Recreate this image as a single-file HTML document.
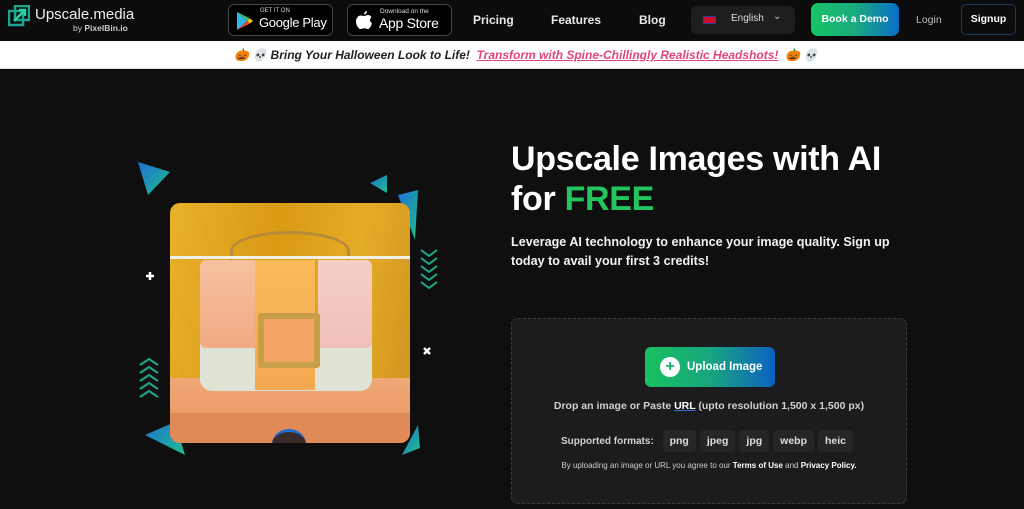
<!DOCTYPE html>
<html><head><meta charset="utf-8"><style>
*{margin:0;padding:0;box-sizing:border-box}
body{width:1024px;height:509px;overflow:hidden;background:#0f0f10;font-family:"Liberation Sans",sans-serif;color:#fff;position:relative}
.nav{position:absolute;left:0;top:0;width:1024px;height:41px;background:#0c0c0d}
.abs{position:absolute}
.store{position:absolute;top:4px;height:32px;border:1px solid #444;border-radius:6px;background:#000}
.nl{position:absolute;top:13px;font-size:12px;font-weight:bold;color:#e8e8e8}
.banner{position:absolute;top:41px;left:0;width:1024px;height:28px;background:#fff;border-bottom:1px solid #ddd;font-size:12px;font-style:italic;font-weight:bold;color:#222}
.fmt{display:inline-block;background:#262628;border-radius:4px;padding:3px 7px;margin-left:4px;font-size:10.5px;color:#ddd;font-weight:bold}
</style></head><body>
<div class="nav">
 <svg class="abs" style="left:8px;top:5px" width="22" height="22" viewBox="0 0 22 22"><rect x="1" y="6" width="14" height="14" fill="none" stroke="#1fa58f" stroke-width="2.5"/><rect x="7" y="1" width="14" height="14" fill="none" stroke="#1fa58f" stroke-width="2.5"/><path d="M6 16L17 5M11 5h6v6" stroke="#2dd4a0" stroke-width="2.5" fill="none"/></svg>
 <div class="abs" style="left:35px;top:6px;font-size:15px;color:#eee">Upscale.media</div>
 <div class="abs" style="left:73px;top:23px;font-size:8.5px;color:#ccc">by <b>PixelBin.io</b></div>
 <div class="store" style="left:228px;width:105px"><svg class="abs" style="left:7px;top:6px" width="18" height="20" viewBox="0 0 18 20"><path d="M1 1L11 10L1 19Z" fill="#2fb6ea"/><path d="M1 1L14 7.5L11 10Z" fill="#34c56b"/><path d="M1 19L14 12.5L11 10Z" fill="#ea4335"/><path d="M14 7.5L17 10L14 12.5L11 10Z" fill="#fbbc04"/></svg><div class="abs" style="left:31px;top:3px;font-size:6px;color:#ddd">GET IT ON</div><div class="abs" style="left:30px;top:10px;font-size:13px;color:#fff;white-space:nowrap;letter-spacing:-0.3px">Google Play</div></div>
 <div class="store" style="left:347px;width:105px"><svg class="abs" style="left:8px;top:6px" width="16" height="19" viewBox="0 0 16 19"><path d="M11 0c0 2-1.5 3.5-3 3.5C8 1.5 9.5 0 11 0zM8 5c1.5 0 2.5-1 4-1 1.5 0 3 1 3.5 2.5-2 1-2 4.5.5 5.5-.7 2.5-2.3 6-4 6-1.4 0-1.8-.8-3.5-.8S6 18 4.5 18C2.5 18 0 14 0 10.5 0 7 2.3 4.5 4.5 4.5 6 4.5 7 5 8 5z" fill="#fff"/></svg><div class="abs" style="left:32px;top:3px;font-size:6.5px;color:#ddd">Download on the</div><div class="abs" style="left:31px;top:10px;font-size:14px;color:#fff;white-space:nowrap;letter-spacing:-0.3px">App Store</div></div>
 <div class="nl" style="left:473px">Pricing</div>
 <div class="nl" style="left:551px">Features</div>
 <div class="nl" style="left:639px">Blog</div>
 <div class="abs" style="left:691px;top:6px;width:104px;height:28px;background:#1e1e20;border-radius:6px"><div class="abs" style="left:12px;top:10px;width:13px;height:8px;background:#c8102e;border:1px solid #2a3f8f"></div><div class="abs" style="left:40px;top:7px;font-size:10px;color:#ddd">English</div><div class="abs" style="left:82px;top:5px;font-size:10px;color:#ccc">&#8964;</div></div>
 <div class="abs" style="left:811px;top:3px;width:88px;height:33px;border-radius:7px;background:linear-gradient(90deg,#16c464,#1aaa80 50%,#0a6ec8);font-size:10.5px;font-weight:bold;text-align:center;line-height:33px">Book a Demo</div>
 <div class="abs" style="left:916px;top:14px;font-size:10.5px;color:#bbb">Login</div>
 <div class="abs" style="left:961px;top:4px;width:55px;height:31px;border:1px solid #1c3a5a;border-radius:5px;font-size:10.5px;font-weight:bold;text-align:center;line-height:29px">Signup</div>
</div>
<div class="banner"><div class="abs" style="left:234px;top:7px">🎃 💀 Bring Your Halloween Look to Life! &nbsp;<span style="color:#e0457b;text-decoration:underline">Transform with Spine-Chillingly Realistic Headshots!</span> &nbsp;🎃 💀</div></div>

<svg class="abs" style="left:130px;top:150px" width="320" height="320" viewBox="0 0 320 320">
<defs><linearGradient id="g" x1="0" y1="0" x2="1" y2="1"><stop offset="0" stop-color="#1d6fd6"/><stop offset="1" stop-color="#1fbf8a"/></linearGradient></defs>
<path d="M8 12L40 22L18 45Z" fill="url(#g)"/><path d="M240 33L257 25L257 43Z" fill="url(#g)"/><path d="M268 45L288 40L285 90Z" fill="url(#g)"/>
<path d="M15 285L45 272L55 305Z" fill="url(#g)"/><path d="M272 305L288 275L290 298Z" fill="url(#g)"/>
<g stroke="#1ca88a" stroke-width="2" fill="none"><path d="M10 215l9-6 9 6M10 223l9-6 9 6M10 231l9-6 9 6M10 239l9-6 9 6M10 247l9-6 9 6"/><path d="M291 100l8 6 8-6M291 108l8 6 8-6M291 116l8 6 8-6M291 124l8 6 8-6M291 132l8 6 8-6"/></g>
<path d="M16 126h8M20 122v8" stroke="#fff" stroke-width="2.5"/><path d="M294 198l6 6M300 198l-6 6" stroke="#fff" stroke-width="2.5"/>
</svg>
<div class="abs" style="left:170px;top:203px;width:240px;height:240px;border-radius:10px;overflow:hidden;background:linear-gradient(100deg,#e9b12a,#d99a14 40%,#e5ac26 70%,#cf9220)">
 <div class="abs" style="left:0;top:175px;width:240px;height:65px;background:linear-gradient(#f0a877,#e8935f)"></div>
 <div class="abs" style="left:0;top:210px;width:240px;height:30px;background:#e08a55"></div>
 <div class="abs" style="left:60px;top:28px;width:120px;height:40px;border:3px solid #b88a3a;border-bottom:none;border-radius:50% 50% 0 0"></div>
 <div class="abs" style="left:0;top:53px;width:240px;height:3px;background:#f3f0e6"></div>
 <div class="abs" style="left:30px;top:130px;width:172px;height:58px;border-radius:0 0 12px 12px;background:#dfe3d6"></div>
 <div class="abs" style="left:30px;top:57px;width:55px;height:88px;border-radius:6px 0 0 6px;background:linear-gradient(#f6c1a0,#f1aa82)"></div>
 <div class="abs" style="left:85px;top:57px;width:60px;height:130px;background:linear-gradient(#f9ba58,#f4a850)"></div>
 <div class="abs" style="left:148px;top:57px;width:54px;height:88px;border-radius:0 6px 6px 0;background:linear-gradient(#f5cfc6,#efc0b7)"></div>
 <div class="abs" style="left:88px;top:110px;width:62px;height:55px;border:6px solid #c99e48;border-radius:3px;background:#f2a565"></div>
 <div class="abs" style="left:102px;top:226px;width:34px;height:30px;border-radius:50%;background:#3a2b2b;border-top:3px solid #1d6fd6"></div>
</div>

<div class="abs" style="left:511px;top:139px;font-size:34px;font-weight:bold;line-height:40px;letter-spacing:-0.3px">Upscale Images with AI<br>for <span style="color:#22c55e">FREE</span></div>
<div class="abs" style="left:511px;top:233px;font-size:12.6px;font-weight:bold;line-height:19px;color:#f2f2f2">Leverage AI technology to enhance your image quality. Sign up<br>today to avail your first 3 credits!</div>

<div class="abs" style="left:511px;top:318px;width:396px;height:186px;background:#1c1c1e;border:1px dashed #3a3a3c;border-radius:7px">
 <div class="abs" style="left:133px;top:28px;width:130px;height:40px;border-radius:6px;background:linear-gradient(90deg,#19c15f,#18a57e 50%,#0b62c2);font-size:11.5px;font-weight:bold;line-height:40px;padding-left:42px">Upload Image
  <div class="abs" style="left:15px;top:10px;width:20px;height:20px;border-radius:50%;background:#fff;color:#18b36e;font-size:16px;line-height:20px;text-align:center;padding:0">+</div></div>
 <div class="abs" style="left:0;width:394px;top:81px;text-align:center;font-size:10.5px;color:#d0d0d0;font-weight:bold">Drop an image or Paste <span style="color:#fff;text-decoration:underline;text-decoration-color:#3a6bd0">URL</span> (upto resolution 1,500 x 1,500 px)</div>
 <div class="abs" style="left:49px;top:111px;font-size:10px;color:#d0d0d0;font-weight:bold;line-height:16px;white-space:nowrap">Supported formats: <span class="fmt" style="margin-left:6px">png</span><span class="fmt">jpeg</span><span class="fmt">jpg</span><span class="fmt">webp</span><span class="fmt">heic</span></div>
 <div class="abs" style="left:0;width:394px;top:142px;text-align:center;font-size:8px;color:#ccc">By uploading an image or URL you agree to our <b style="color:#fff">Terms of Use</b> and <b style="color:#fff">Privacy Policy.</b></div>
</div>
</body></html>
